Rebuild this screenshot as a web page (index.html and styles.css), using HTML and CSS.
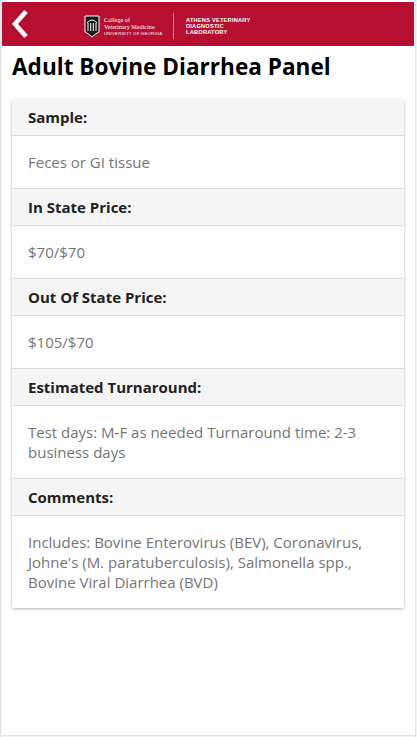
FILE: index.html
```html
<!DOCTYPE html>
<html lang="en">
<head>
<meta charset="utf-8">
<title>Adult Bovine Diarrhea Panel</title>
<link rel="stylesheet" href="styles.css">
</head>
<body>
<div class="frame">
  <header class="bar">
    <svg class="back" width="18" height="30" viewBox="0 0 18 30" aria-hidden="true"><path d="M15 2.5 L4 15 L15 27.5" fill="none" stroke="#fff" stroke-width="4.6"/></svg>
    <div class="logo">
      <svg class="arch" width="16" height="23" viewBox="0 0 16 23" aria-hidden="true">
        <path d="M1 1H15V17Q11 19 8 22Q5 19 1 17Z" fill="#1a1a1a" stroke="#fff" stroke-width="1"/>
        <path d="M3 8Q8 2 13 8M4 8V16M6.700 8V16M9.300 8V16M12 8V16" fill="none" stroke="#fff" stroke-width="1"/>
      </svg>
      <div class="college">
        <span>College of</span>
        <span>Veterinary Medicine</span>
        <span class="uga">UNIVERSITY OF GEORGIA</span>
      </div>
      <div class="rule"></div>
      <div class="lab">
        <span>ATHENS VETERINARY</span>
        <span>DIAGNOSTIC</span>
        <span>LABORATORY</span>
      </div>
    </div>
  </header>
  <h1 class="title">Adult Bovine Diarrhea Panel</h1>
  <section class="card">
    <h2 class="label">Sample:</h2>
    <p class="value">Feces or GI tissue</p>
    <h2 class="label">In State Price:</h2>
    <p class="value">$70/$70</p>
    <h2 class="label">Out Of State Price:</h2>
    <p class="value">$105/$70</p>
    <h2 class="label">Estimated Turnaround:</h2>
    <p class="value">Test days: M-F as needed Turnaround time: 2-3 business days</p>
    <h2 class="label">Comments:</h2>
    <p class="value">Includes: Bovine Enterovirus (BEV), Coronavirus, Johne's (M. paratuberculosis), Salmonella spp., Bovine Viral Diarrhea (BVD)</p>
  </section>
</div>
</body>
</html>
```
FILE: styles.css
```css
* { box-sizing: border-box; }
html, body { margin: 0; padding: 0; height: 100%; background: #fff; overflow: hidden; }
body { font-family: "Open Sans", "Noto Sans", sans-serif; }
.frame {
  height: 737px;
  padding: 2px 3px 3px 2px;
  box-shadow: inset 1px 0 0 #e4e4e4, inset 2px 0 0 #f2f2f2, inset -1px 0 0 #f2f2f2, inset -2px 0 0 #e4e4e4, inset 0 -1px 0 #f2f2f2, inset 0 -2px 0 #e4e4e4;
}
.bar {
  height: 44px;
  background: #b70f2f;
  display: flex;
  align-items: center;
  padding-left: 9px;
}
.back { flex: none; }
.logo {
  display: flex;
  align-items: center;
  margin: 4px 0 0 55px;
  color: #fff;
}
.arch { flex: none; margin-right: 4px; }
.college {
  display: flex;
  flex-direction: column;
  font-family: "Liberation Serif", serif;
  font-size: 6.2px;
  line-height: 7px;
  white-space: nowrap;
  width: 69px;
  padding-top: 1px;
}
.college .uga { font-size: 4.3px; font-family: "Liberation Sans", sans-serif; letter-spacing: .2px; }
.rule { width: 1px; height: 26px; background: #d98a99; margin-right: 12px; }
.lab {
  display: flex;
  flex-direction: column;
  font-family: "Liberation Sans", sans-serif;
  font-weight: 700;
  font-size: 5.7px;
  line-height: 6.200px;
  letter-spacing: .2px;
  white-space: nowrap;
}
.title {
  margin: 0;
  padding: 6px 0 0 10px;
  height: 53px;
  font-size: 22.600px;
  line-height: 30px;
  font-weight: 700;
  color: #000;
}
.card {
  margin: 0 10px;
  background: #fff;
  border-radius: 2px;
  box-shadow: 0 1px 3px rgba(0,0,0,.3);
}
.label {
  margin: 0;
  height: 37px;
  padding: 1px 16px 0;
  background: #f5f5f5;
  border-bottom: 1px solid #ddd;
  font-size: 15px;
  line-height: 35px;
  font-weight: 700;
  color: #222;
}
.value {
  margin: 0;
  padding: 16px;
  border-bottom: 1px solid #ddd;
  font-size: 15px;
  line-height: 20px;
  color: #757575;
}
.value:last-child { border-bottom: 0; }
```
